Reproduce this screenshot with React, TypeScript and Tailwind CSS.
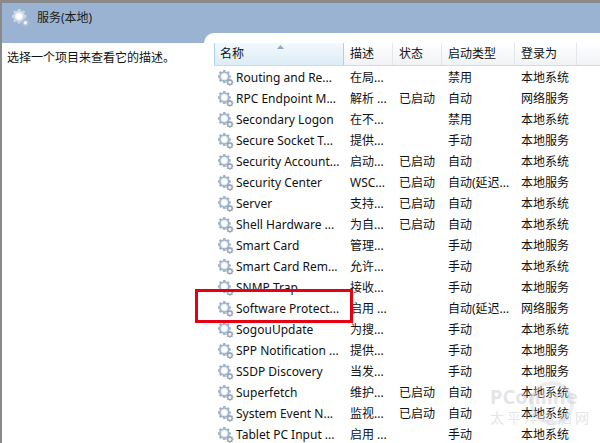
const rows = [
  ["Routing and Re...", "在局...", "", "禁用", "本地系统"],
  ["RPC Endpoint M...", "解析 ...", "已启动", "自动", "网络服务"],
  ["Secondary Logon", "在不...", "", "禁用", "本地系统"],
  ["Secure Socket T...", "提供...", "", "手动", "本地服务"],
  ["Security Account...", "启动...", "已启动", "自动", "本地系统"],
  ["Security Center", "WSC...", "已启动", "自动(延迟...", "本地服务"],
  ["Server", "支持...", "已启动", "自动", "本地系统"],
  ["Shell Hardware ...", "为自...", "已启动", "自动", "本地系统"],
  ["Smart Card", "管理...", "", "手动", "本地服务"],
  ["Smart Card Rem...", "允许...", "", "手动", "本地系统"],
  ["SNMP Trap", "接收...", "", "手动", "本地服务"],
  ["Software Protect...", "启用 ...", "", "自动(延迟...", "网络服务"],
  ["SogouUpdate", "为搜...", "", "手动", "本地系统"],
  ["SPP Notification ...", "提供...", "", "手动", "本地服务"],
  ["SSDP Discovery", "当发...", "", "手动", "本地服务"],
  ["Superfetch", "维护...", "已启动", "自动", "本地系统"],
  ["System Event N...", "监视...", "已启动", "自动", "本地系统"],
  ["Tablet PC Input ...", "启用 ...", "", "手动", "本地系统"],
];

const cols = ["描述", "状态", "启动类型", "登录为"];
const widths = ["w-[49px]", "w-[49px]", "w-[73px]", "w-[62px]"];
const teeth = [0, 45, 90, 135, 180, 225, 270, 315];

function Gear({ size = 16, faded = false }: { size?: number; faded?: boolean }) {
  const big = faded ? "#c9d6e5" : "#9db2c9";
  const small = faded ? "#aebfd1" : "#98a3b1";
  return (
    <svg width={size} height={size} viewBox="0 0 16 16" className="shrink-0">
      {teeth.map((a) => (
        <rect key={a} x="5.1" y="0" width="2.4" height="3" fill={big} transform={`rotate(${a} 6.3 6.5)`} />
      ))}
      <circle cx="6.3" cy="6.5" r="4.5" fill="#e6edf4" stroke={big} strokeWidth="1.6" />
      <circle cx="6.3" cy="6.5" r="2.6" fill="#ffffff" />
      {teeth.map((a) => (
        <rect key={a} x="11.2" y="8.8" width="1.4" height="1.7" fill={small} transform={`rotate(${a} 11.9 12.3)`} />
      ))}
      <circle cx="11.9" cy="12.3" r="2.2" fill="#f2f4f6" stroke={small} strokeWidth="1.2" />
    </svg>
  );
}

export default function App() {
  return (
    <div className="relative h-[443px] w-[600px] overflow-hidden border-t-[3px] border-l-2 border-[#8a8a8a] bg-[#9ab3d2] font-['Noto_Sans','Noto_Sans_CJK_SC',sans-serif] text-[12px] text-[#111]">
      <div className="flex h-[30px] items-center gap-[7px] pl-[10px] text-[#1c1c1c]">
        <Gear size={18} faded />
        <span>服务(本地)</span>
      </div>
      <div className="flex h-[410px]">
        <div className="mt-[10px] w-[202px] bg-white pl-[5px] pt-[5px] leading-[20px]">选择一个项目来查看它的描述。</div>
        <div className="flex-1 rounded-tl-[10px] bg-white pl-[10px] pt-[10px]">
          <div className="flex h-[23px] border-b border-[#d5d9de] leading-[22px]">
            <div className="relative w-[130px] border-x border-[#a9d4ec] bg-gradient-to-b from-[#f3f9fd] to-[#dcecf6] pl-[5px]">
              <span>名称</span>
              <svg width="7" height="4" viewBox="0 0 7 4" className="absolute left-[62px] top-[2px]">
                <path d="M3.5 0 7 4H0Z" fill="#8fa9bf" />
              </svg>
            </div>
            {cols.map((c, i) => (
              <div key={c} className={`${widths[i]} border-r border-[#e3e6ea] bg-gradient-to-b from-white to-[#f0f3f6] pl-[6px]`}>
                {c}
              </div>
            ))}
            <div className="flex-1 bg-gradient-to-b from-white to-[#f0f3f6]" />
          </div>
          <div className="pt-px">
            {rows.map((r) => (
              <div key={r[0]} className="flex h-[21px] items-center">
                <div className="flex w-[131px] items-center gap-[2px] pl-[4px]">
                  <Gear />
                  <span className="whitespace-nowrap">{r[0]}</span>
                </div>
                <div className="w-[49px] whitespace-nowrap pl-[5px]">{r[1]}</div>
                <div className="w-[49px] whitespace-nowrap pl-[5px]">{r[2]}</div>
                <div className="w-[73px] whitespace-nowrap pl-[5px]">{r[3]}</div>
                <div className="whitespace-nowrap pl-[5px]">{r[4]}</div>
              </div>
            ))}
          </div>
        </div>
      </div>
      <div className="absolute left-[193px] top-[286px] h-[34px] w-[158px] border-[3.5px] border-[#e60012]" />
      <svg width="60" height="50" viewBox="0 0 60 50" className="absolute left-[520px] top-[375px]">
        <circle cx="30" cy="25" r="20" fill="none" stroke="#cfd3d8" strokeOpacity="0.4" strokeWidth="4" />
      </svg>
      <div className="absolute left-[488px] top-[384px] text-[#c8ccd2]/50">
        <div className="text-[20px] font-bold leading-[20px]">PConline</div>
        <div className="mt-[3px] text-[14px] leading-[16px] tracking-[3px]">太平洋电脑网</div>
      </div>
    </div>
  );
}
